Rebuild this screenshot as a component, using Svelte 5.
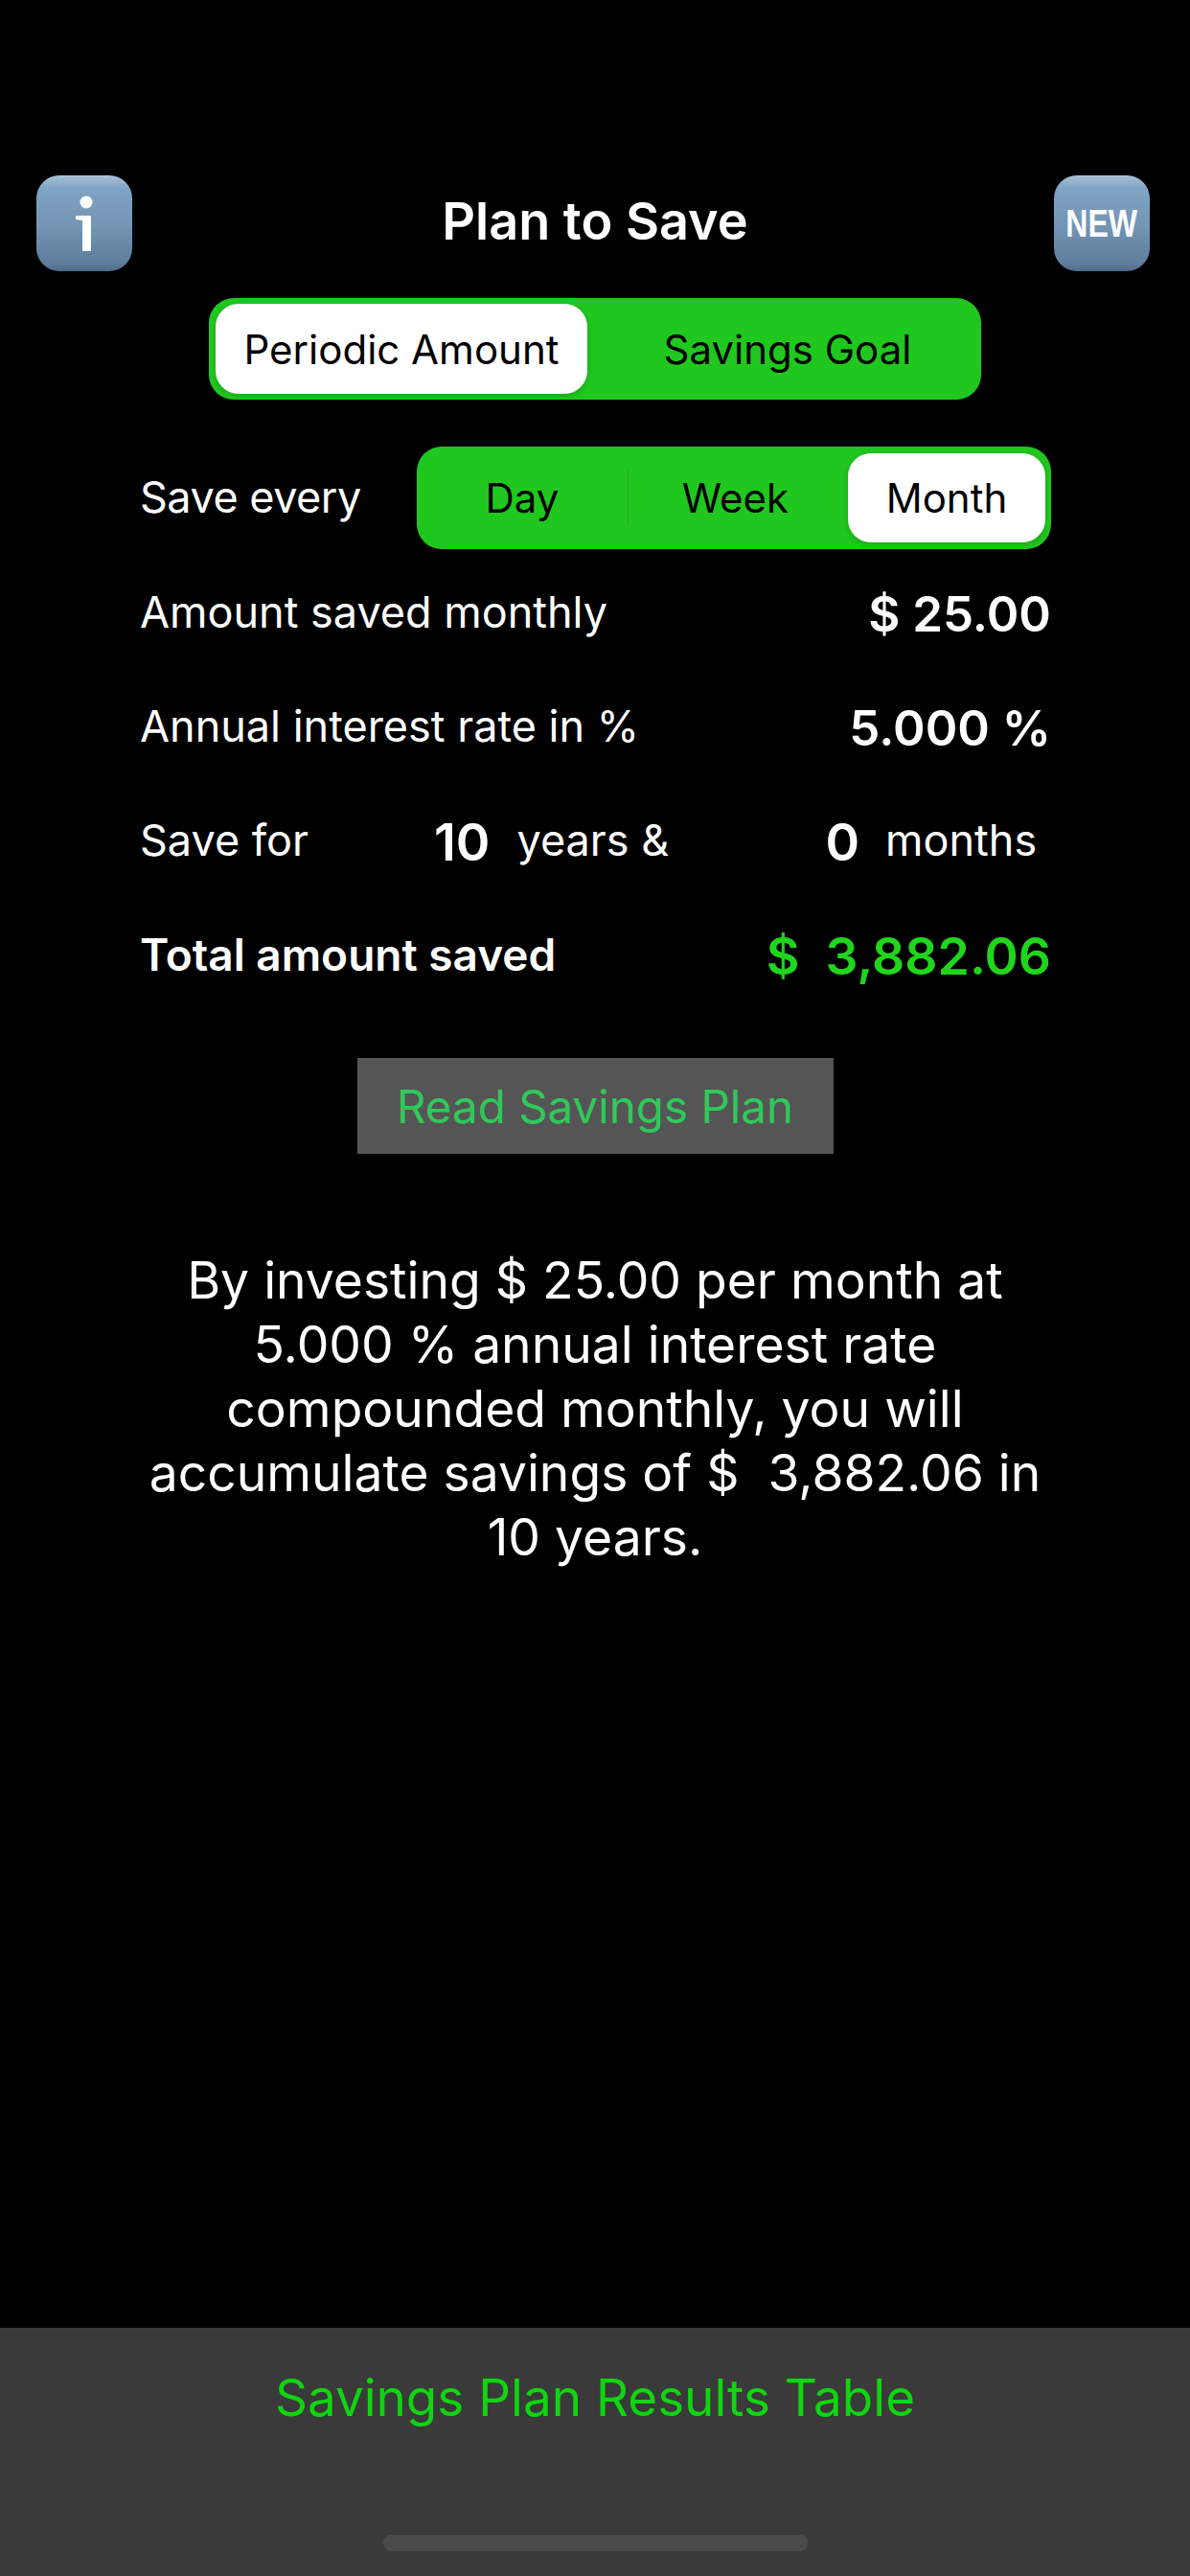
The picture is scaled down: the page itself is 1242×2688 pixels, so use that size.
<script>
    let planTabs = ['Periodic Amount', 'Savings Goal'];
    let periods = ['Day', 'Week', 'Month'];
</script>

<div class="page">
    <header class="top">
        <div class="emoji">
            <svg viewBox="0 0 100 100" width="100" height="100">
                <circle cx="52" cy="28" r="6.5" fill="#fff"/>
                <path d="M41 42 H57 V79 H48 V47 L41 46 Z" fill="#fff"/>
            </svg>
        </div>
        <h1>Plan to Save</h1>
        <div class="emoji"><span class="new">NEW</span></div>
    </header>

    <div class="plan-wrap">
        <div class="seg plan">
            {#each planTabs as tab, i}
                <div class="seg-item" class:active={i === 0}>{tab}</div>
            {/each}
        </div>
    </div>

    <section class="form">
        <div class="row first">
            <span class="every">Save every</span>
            <div class="seg period">
                {#each periods as p, i}
                    <div class="seg-item" class:active={i === 2}>{p}</div>
                    {#if i === 0}<i class="divider"></i>{/if}
                {/each}
            </div>
        </div>
        <div class="row">
            <span>Amount saved monthly</span>
            <b class="value">$ 25.00</b>
        </div>
        <div class="row">
            <span>Annual interest rate in %</span>
            <b class="value">5.000 %</b>
        </div>
        <div class="row for">
            <span class="for-label">Save for</span>
            <b class="num-years">10</b>
            <span class="unit-years">years &amp;</span>
            <b class="num-months">0</b>
            <span>months</span>
        </div>
        <div class="row total">
            <strong>Total amount saved</strong>
            <b class="value green">$&nbsp; 3,882.06</b>
        </div>
    </section>

    <button class="read">Read Savings Plan</button>

    <p class="summary">By investing $ 25.00 per month at 5.000 % annual interest rate compounded monthly, you will accumulate savings of $&nbsp; 3,882.06 in 10 years.</p>

    <footer class="bottom">
        <div class="results">Savings Plan Results Table</div>
        <div class="home"></div>
    </footer>
</div>

<style>
    :global(body) {
        margin: 0;
        background: #000;
    }
    .page {
        width: 1242px;
        height: 2688px;
        background: #000;
        color: #fff;
        font-family: Inter, "Liberation Sans", sans-serif;
        display: flex;
        flex-direction: column;
        overflow: hidden;
    }
    .top {
        display: flex;
        align-items: center;
        justify-content: space-between;
        padding: 183px 42px 0 38px;
    }
    .top h1 {
        margin: -5px 0 0 4px;
        font-size: 54px;
        font-weight: 600;
        line-height: 100px;
    }
    .emoji {
        width: 100px;
        height: 100px;
        border-radius: 24px;
        background: linear-gradient(#a9c2d9 0, #7fa3c4 14%, #7596b6 50%, #5f7d9c 92%, #4f6a86 100%);
        display: flex;
        align-items: center;
        justify-content: center;
    }
    .new {
        color: #fff;
        font-family: "Liberation Sans", sans-serif;
        font-weight: 700;
        font-size: 40px;
        transform: scaleX(0.8);
    }
    .plan-wrap {
        display: flex;
        justify-content: center;
        padding: 28px 0 0 0;
    }
    .seg {
        background: #20c71e;
        display: flex;
        align-items: center;
        font-size: 42px;
        color: #000;
        box-sizing: border-box;
    }
    .plan {
        width: 806px;
        height: 106px;
        border-radius: 26px;
        padding: 0 7px;
    }
    .plan .seg-item {
        height: 94px;
        display: flex;
        align-items: center;
        justify-content: center;
    }
    .plan .seg-item:first-child {
        width: 388px;
    }
    .plan .seg-item:last-child {
        flex: 1;
        padding-left: 14px;
    }
    .period {
        width: 662px;
        height: 107px;
        border-radius: 26px;
        padding: 0 6px 0 0;
    }
    .period .seg-item {
        height: 93px;
        display: flex;
        align-items: center;
        justify-content: center;
    }
    .period .seg-item:nth-child(1) {
        width: 220px;
    }
    .period .seg-item:nth-child(3) {
        width: 229px;
        box-sizing: border-box;
        padding-right: 6px;
    }
    .period .seg-item:nth-child(4) {
        flex: 1;
    }
    .seg-item.active {
        background: #fff;
        border-radius: 24px;
        box-shadow: 0 2px 6px rgba(0, 0, 0, 0.18);
    }
    .divider {
        width: 1px;
        height: 58px;
        background: #2aa82a;
    }
    .form {
        padding: 0 145px 0 146px;
        font-size: 45px;
        margin-top: 49px;
    }
    .every {
        letter-spacing: -0.5px;
        margin-top: -2px;
    }
    .row {
        display: flex;
        align-items: center;
        justify-content: space-between;
        height: 119px;
    }
    .row.first {
        height: 107px;
        margin-bottom: 6px;
    }
    .value {
        font-size: 51px;
        font-weight: 600;
        margin-top: 3px;
    }
    .value.green {
        color: #20d51c;
        font-size: 53.5px;
    }
    .row.for {
        justify-content: flex-start;
    }
    .for b {
        font-size: 54px;
        font-weight: 600;
        margin-top: 3px;
    }
    .for-label {
        width: 307px;
    }
    .unit-years {
        margin-left: 28px;
        width: 322px;
    }
    .num-months {
        margin-right: 27px;
    }
    .total strong {
        font-size: 46px;
        font-weight: 600;
    }
    .read {
        align-self: center;
        width: 497px;
        height: 100px;
        margin-top: 49px;
        background: #555;
        border: 0;
        padding: 0;
        color: #30c85a;
        font-family: inherit;
        font-size: 47.5px;
    }
    .summary {
        margin: 98px 0 0;
        padding: 0 150px;
        text-align: center;
        font-size: 53.4px;
        line-height: 67px;
    }
    .bottom {
        margin-top: auto;
        height: 259px;
        box-sizing: border-box;
        background: #3a3a3a;
        display: flex;
        flex-direction: column;
        align-items: center;
        padding-top: 43px;
    }
    .results {
        color: #10d510;
        font-size: 53px;
        line-height: 60px;
    }
    .home {
        width: 443px;
        height: 17px;
        border-radius: 8px;
        background: #4a4a4a;
        margin-top: 113px;
    }
</style>
